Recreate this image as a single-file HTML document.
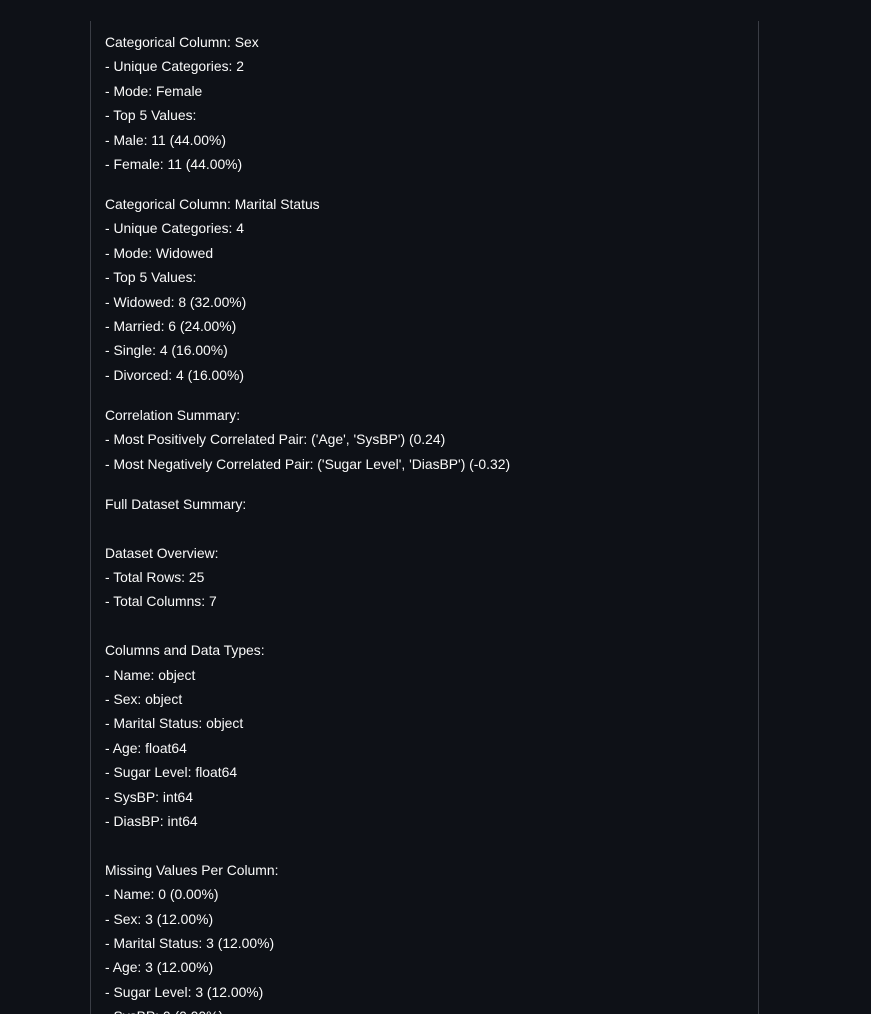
<!DOCTYPE html>
<html><head><meta charset="utf-8"><style>
html,body{margin:0;padding:0;background:#0e1117;width:871px;height:1014px;overflow:hidden}
.box{position:absolute;left:90px;top:21px;width:667px;height:993px;border-left:1px solid #3a3d45;border-right:1px solid #3a3d45}
.t{position:absolute;left:105px;top:30px;height:984px;overflow:hidden;color:#fafafa;font-family:"Liberation Sans",sans-serif;font-size:13.9px;line-height:24.4px;white-space:pre}
.p{margin:0 0 15.6px 0}
</style></head><body>
<div class="box"></div>
<div class="t"><div class="p">Categorical Column: Sex
- Unique Categories: 2
- Mode: Female
- Top 5 Values:
- Male: 11 (44.00%)
- Female: 11 (44.00%)</div><div class="p">Categorical Column: Marital Status
- Unique Categories: 4
- Mode: Widowed
- Top 5 Values:
- Widowed: 8 (32.00%)
- Married: 6 (24.00%)
- Single: 4 (16.00%)
- Divorced: 4 (16.00%)</div><div class="p">Correlation Summary:
- Most Positively Correlated Pair: ('Age', 'SysBP') (0.24)
- Most Negatively Correlated Pair: ('Sugar Level', 'DiasBP') (-0.32)</div><div class="p">Full Dataset Summary:

Dataset Overview:
- Total Rows: 25
- Total Columns: 7

Columns and Data Types:
- Name: object
- Sex: object
- Marital Status: object
- Age: float64
- Sugar Level: float64
- SysBP: int64
- DiasBP: int64

Missing Values Per Column:
- Name: 0 (0.00%)
- Sex: 3 (12.00%)
- Marital Status: 3 (12.00%)
- Age: 3 (12.00%)
- Sugar Level: 3 (12.00%)
- SysBP: 0 (0.00%)</div></div>
</body></html>
